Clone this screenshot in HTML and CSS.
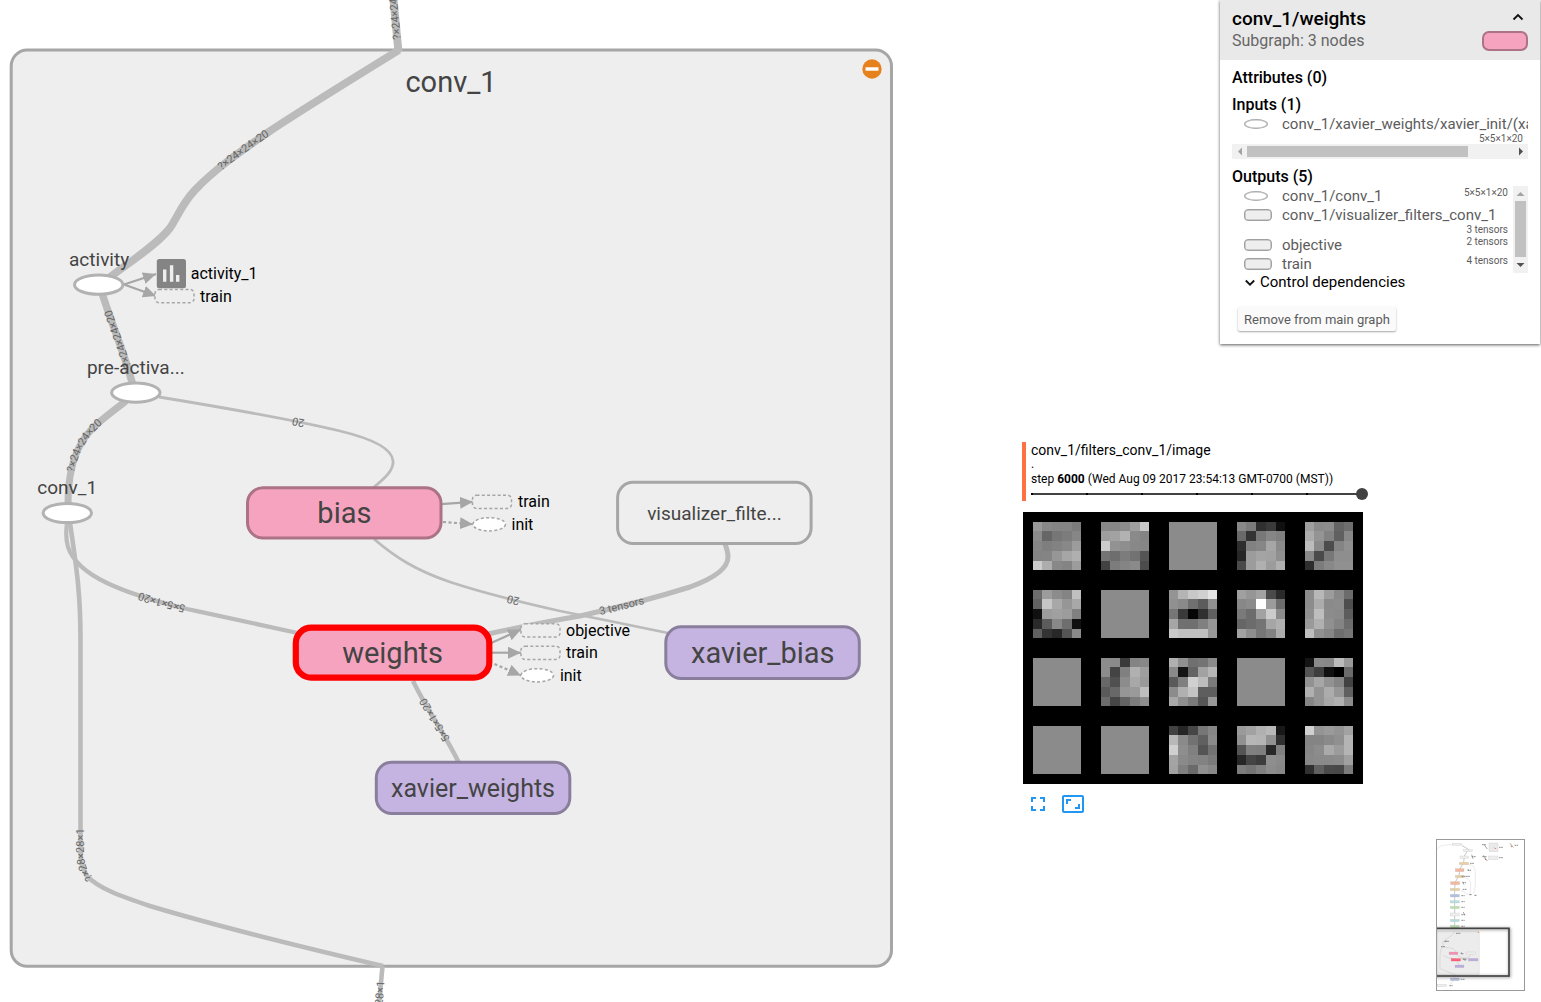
FILE: index.html
```html
<!DOCTYPE html>
<html lang="en">
<head>
<meta charset="utf-8">
<title>Graph explorer</title>
<link rel="stylesheet" href="styles.css">
</head>
<body>
<main class="app">
<svg class="graph" width="900" height="1002" viewBox="0 0 900 1002">
  <defs>
    <marker id="arrow" markerUnits="userSpaceOnUse" markerWidth="14" markerHeight="13" refX="13" refY="6" orient="auto">
      <path d="M0,0 L13,6 L0,12 Z" fill="#a6a6a6"/>
    </marker>
  </defs>
  <rect class="group" x="11.2" y="50" width="880.3" height="916.3" rx="16"/>
  <g class="edges">
    <path id="e-out" stroke-width="8" d="M398.500,52 L387.500,-62"/>
    <path id="e-act" stroke-width="7.800" d="M109,278 C125,265 156,246 170,228 C179,214 182,204 195,190 C214,170 238,153 270,131 C300,111 360,74 399,50"/>
    <path id="e-pre" stroke-width="7.500" d="M132.500,384 C124,352 112,325 102,293"/>
    <path id="e-conv" stroke-width="7" d="M68,504 C68,480 71,460 82,442 C90,428 105,417 126,401"/>
    <path id="e-bias" stroke-width="2.800" d="M373,488 C385,478 394,470 393,461 C392,446 365,437 340,431 C290,419 220,407 159,397"/>
    <path id="e-xbias" stroke-width="2.700" d="M668,633 C640,627 590,617 560,611 C520,602 480,592 450,582 C415,570 395,557 374,539"/>
    <path id="e-viz" stroke-width="5" d="M488,634 C520,627 550,621 580,616 C620,607 655,598 690,587 C712,579 728,569 728,557 C728,553 727,549 725,544"/>
    <path id="e-w" stroke-width="4.200" d="M300,633.500 C250,623 220,616 187,609 C150,600 128,593 107,583 C88,574 73,562 68,547 C66,540 66,530 67,523"/>
    <path id="e-xw" stroke-width="4.500" d="M458.500,762 C445,734 428,712 413,681"/>
    <path id="e-in" stroke-width="4.600" d="M383,966 C310,949 220,927 150,906 C120,896 98,888 87,876 C80.500,866 80.500,860 80.500,840 L80.500,640 C80.500,590 76,565 70,523"/>
    <path id="e-src" stroke-width="4.600" d="M374,1060 L382.500,966"/>
  </g>
  <g class="edge-labels">
    <text dy="3.500"><textPath href="#e-out" startOffset="12.500">?×24×24×20</textPath></text>
    <text dy="3.500" text-anchor="middle"><textPath href="#e-act" startOffset="50.400%">?×24×24×20</textPath></text>
    <text dy="3.500" text-anchor="middle"><textPath href="#e-pre" startOffset="49.500%">?×24×24×20</textPath></text>
    <text dy="3.500" text-anchor="middle"><textPath href="#e-conv" startOffset="50%">?×24×24×20</textPath></text>
    <text dy="3.500" text-anchor="middle"><textPath href="#e-bias" startOffset="50%">20</textPath></text>
    <text dy="3.500" text-anchor="middle"><textPath href="#e-xbias" startOffset="50.700%">20</textPath></text>
    <text dy="3.500" text-anchor="middle"><textPath href="#e-viz" startOffset="50.200%">3 tensors</textPath></text>
    <text dy="3.500" text-anchor="middle"><textPath href="#e-w" startOffset="50.900%">5×5×1×20</textPath></text>
    <text dy="3.500" text-anchor="middle"><textPath href="#e-xw" startOffset="52%">5×5×1×20</textPath></text>
    <text dy="3.500" text-anchor="middle"><textPath href="#e-in" startOffset="50%">?×28×28×1</textPath></text>
    <text dy="3.500" text-anchor="end"><textPath href="#e-src" startOffset="79.500">?×28×28×1</textPath></text>
  </g>
  <g class="links">
    <path d="M124,284.500 L156,274"/>
    <path d="M124,284.500 L156,296"/>
    <path d="M441,504.200 L473,501.800"/>
    <path class="dashed" d="M443,522 L473,524.200"/>
    <path d="M490,643.500 L521,629.500"/>
    <path d="M490,652.700 L521,652.700"/>
    <path class="dashed" d="M494.500,664 L521,675.500"/>
  </g>
  <g class="ops">
    <ellipse cx="98.700" cy="284.700" rx="24.200" ry="9.600"/>
    <ellipse cx="135.800" cy="392.600" rx="24.200" ry="9.600"/>
    <ellipse cx="67.300" cy="513" rx="24.200" ry="9.600"/>
  </g>
  <g class="stubs">
    <rect x="155" y="289.500" width="39" height="13.200" rx="4"/>
    <rect x="472.500" y="495.200" width="39" height="13.200" rx="4"/>
    <rect x="521" y="623.800" width="39" height="13.200" rx="4"/>
    <rect x="521" y="646.200" width="39" height="13.200" rx="4"/>
    <ellipse cx="489.200" cy="524.300" rx="16.300" ry="6.600"/>
    <ellipse cx="537.300" cy="675.300" rx="16.300" ry="6.600"/>
  </g>
  <g class="summary">
    <rect x="156.800" y="259" width="29.200" height="29.200" rx="2.500" fill="#848484"/>
    <path d="M163,269.500h3.400v12.200H163zM169.900,265.200h3.400v16.500h-3.400zM176,275h3.400v6.700H176z" fill="#eee"/>
  </g>
  <rect class="node pink" x="247.500" y="487.800" width="193.500" height="50.300" rx="15.500"/>
  <rect class="node plain" x="617.600" y="482.300" width="193.500" height="61.300" rx="15.500"/>
  <rect class="node pink selected" x="295.800" y="627.700" width="193.500" height="50" rx="15.500"/>
  <rect class="node violet" x="665.800" y="626.700" width="193.500" height="51.800" rx="15.500"/>
  <rect class="node violet" x="376.300" y="762.200" width="193.500" height="51.300" rx="15.500"/>
  <g class="labels" text-anchor="middle">
    <text class="large" x="451" y="91.500">conv_1</text>
    <text class="large" x="344.400" y="522.500">bias</text>
    <text class="large" x="392.600" y="662.500">weights</text>
    <text class="large" x="762.800" y="662.500">xavier_bias</text>
    <text class="medium" x="473" y="796.500">xavier_weights</text>
    <text x="714.400" y="519.700">visualizer_filte...</text>
    <text x="99.100" y="266">activity</text>
    <text x="135.800" y="374">pre-activa...</text>
    <text x="67.200" y="494">conv_1</text>
  </g>
  <g class="notes">
    <text x="190.700" y="279">activity_1</text>
    <text x="200" y="302">train</text>
    <text x="518" y="507">train</text>
    <text x="511.500" y="530">init</text>
    <text x="566" y="636">objective</text>
    <text x="566" y="658">train</text>
    <text x="559.900" y="681">init</text>
  </g>
  <circle cx="872" cy="69" r="9.700" fill="#e6821e"/>
  <rect x="865.500" y="67.300" width="13" height="3.400" fill="#fff"/>
</svg>

<div class="side">
  <section class="panel">
    <header class="panel-head">
      <div class="panel-names">
        <h1>conv_1/weights</h1>
        <p>Subgraph: 3 nodes</p>
      </div>
      <div class="panel-icons">
        <svg width="12" height="8" viewBox="0 0 12 8"><path d="M1.500,6.500 L6,2 L10.500,6.500" fill="none" stroke="#111" stroke-width="1.800"/></svg>
        <span class="swatch"></span>
      </div>
    </header>
    <div class="panel-body">
      <h2>Attributes (0)</h2>
      <h2>Inputs (1)</h2>
      <div class="inputs">
        <div class="row first"><i class="oval"></i><span>conv_1/xavier_weights/xavier_init/(xavier)</span></div>
        <div class="size-line">5×5×1×20</div>
        <div class="hbar">
          <svg width="15" height="15"><path d="M10,3.500 L6,7.500 L10,11.500Z" fill="#a3a3a3"/></svg>
          <span class="hthumb"></span>
          <svg class="end" width="15" height="15"><path d="M6,3.500 L10,7.500 L6,11.500Z" fill="#505050"/></svg>
        </div>
      </div>
      <h2>Outputs (5)</h2>
      <div class="outputs">
        <div class="list">
          <div class="row"><i class="oval"></i><span>conv_1/conv_1</span><small>5×5×1×20</small></div>
          <div class="row"><i class="pill"></i><span>conv_1/visualizer_filters_conv_1</span></div>
          <div class="size-line">3 tensors</div>
          <div class="row"><i class="pill"></i><span>objective</span><small>2 tensors</small></div>
          <div class="row"><i class="pill"></i><span>train</span><small>4 tensors</small></div>
        </div>
        <div class="vbar">
          <svg width="15" height="15"><path d="M3.500,10 L7.500,6 L11.500,10Z" fill="#a3a3a3"/></svg>
          <span class="vthumb"></span>
          <svg class="end" width="15" height="15"><path d="M3.500,5 L7.500,9 L11.500,5Z" fill="#505050"/></svg>
        </div>
      </div>
      <div class="control">
        <svg width="10" height="8" viewBox="0 0 10 8"><path d="M0.800,1.500 L5,5.700 L9.200,1.500" fill="none" stroke="#111" stroke-width="1.800"/></svg>
        <span>Control dependencies</span>
      </div>
      <button class="remove">Remove from main graph</button>
    </div>
  </section>

  <section class="card">
    <div class="card-head">
      <div class="card-title">conv_1/filters_conv_1/image</div>
      <div class="card-dot">.</div>
      <div class="card-step">step <b>6000</b> (Wed Aug 09 2017 23:54:13 GMT-0700 (MST))</div>
      <div class="slider"><i></i><i></i><i></i><i></i><i></i><i></i><span class="knob"></span></div>
    </div>
    <svg class="filters" id="filters" width="340" height="272" shape-rendering="crispEdges"></svg>
    <div class="actions">
      <svg width="24" height="24" viewBox="0 0 24 24"><path d="M7 14H5v5h5v-2H7v-3zm-2-4h2V7h3V5H5v5zm12 7h-3v2h5v-5h-2v3zM14 5v2h3v3h2V5h-5z"/></svg>
      <svg width="24" height="24" viewBox="0 0 24 24"><path d="M19 12h-2v3h-3v2h5v-5zM7 9h3V7H5v5h2V9zm14-6H3c-1.100 0-2 .9-2 2v14c0 1.100.9 2 2 2h18c1.100 0 2-.9 2-2V5c0-1.100-.9-2-2-2zm0 16.010H3V4.990h18v14.020z"/></svg>
    </div>
  </section>

  <div class="minimap">
    <svg width="87" height="150" viewBox="21 24 261 450">
      <g fill="none" stroke="#d4d4d4" stroke-width="1.500">
        <path d="M67,38 C40,38 25,42 20,52"/>
        <path d="M104,96 C130,98 136,100 136,130 C136,160 136,170 130,185 M92,135 C118,138 122,145 122,160 L120,185 M92,175 C105,180 110,188 125,188"/>
      </g>
      <path d="M95,40 L115,52 L103,72 L101,92 L90,110 L87,130 L76,150 L74,170 L74,290" fill="none" stroke="#aaa" stroke-width="2"/>
      <rect x="20" y="297" width="128" height="131" rx="3" fill="#ececec" stroke="#ccc"/>
      <path d="M75,298 C65,318 42,318 38,332 L40,345 C28,350 30,370 30,410 L75,428 L74,440 L60,458 M42,345 C60,348 78,348 76,360 M40,370 C60,382 55,376 80,382 L88,402 M80,368 C90,380 130,382 130,382 M90,381 C110,376 122,378 122,366" fill="none" stroke="#bdbdbd" stroke-width="1.200"/>
      <g stroke="#bbb" stroke-width=".8">
        <rect x="67" y="34" width="28" height="6" fill="#eee"/><rect x="101" y="53" width="26" height="6" fill="#eee"/>
        <rect x="90" y="72" width="26" height="7" fill="#eee"/><rect x="88" y="91" width="28" height="7" fill="#e9cf9e"/>
        <rect x="76" y="110" width="26" height="9" fill="#f3b7a0"/><rect x="76" y="130" width="26" height="7" fill="#e9cf9e"/>
        <rect x="62" y="149" width="27" height="9" fill="#f3b7a0"/><rect x="61" y="169" width="28" height="7" fill="#e9cf9e"/>
        <rect x="61" y="187" width="27" height="8" fill="#aebfe0"/><rect x="61" y="206" width="27" height="7" fill="#b4dfe1"/>
        <rect x="61" y="223" width="27" height="7" fill="#b8e2a8"/><rect x="61" y="243" width="27" height="9" fill="#eee"/>
        <rect x="61" y="262" width="27" height="7" fill="#b4dfe1"/><rect x="61" y="280" width="27" height="7" fill="#b8e2a8"/>
        <rect x="177" y="33" width="27" height="26" fill="#eaeaea"/><rect x="176" y="72" width="28" height="11" fill="#eee"/>
        <rect x="57" y="360" width="27" height="8" fill="#f48fb1"/><rect x="108" y="360" width="28" height="8" fill="#eee"/>
        <rect x="64" y="380" width="27" height="7" fill="#fb6584" stroke="#e34"/><rect x="115" y="379" width="29" height="8" fill="#bcabdd"/>
        <rect x="75" y="399" width="27" height="8" fill="#bcabdd"/><rect x="61" y="438" width="27" height="8" fill="#b7c2df"/>
        <rect x="22" y="457" width="28" height="7" fill="#eee"/>
      </g>
      <path d="M113,115h10M95,133h25M98,152h10M98,172h12M94,191h10M94,209h10M94,226h10M94,248h12M94,265h10M94,283h10M92,442h12M125,74h12M120,94h12M207,46h12M207,77h12M156,38h12M157,74h14M254,40h10M118,188h8M133,190h8M92,365h8M98,382h12M45,328h12M33,344h12M78,304h14M58,461h10" stroke="#555" stroke-width="2" stroke-dasharray="5 1.500" fill="none"/>
      <path d="M113,111l4,5M97,149l5,9M125,68l4,12M100,240l4,10M162,37l10,14M160,70l12,17M240,34l10,12M94,361l4,6M101,378l5,9M42,330l8,-4" stroke="#777" stroke-width="2" fill="none"/>
      <path d="M193,47l4,4M164,80l4,4M242,42l4,3" stroke="#e96e58" stroke-width="3"/>
      <circle cx="145" cy="301" r="2" fill="#f08a24"/>
      <rect class="viewport" x="12" y="289" width="225" height="143"/>
    </svg>
  </div>
</div>
</main>
<script src="filters.js"></script>
</body>
</html>
```
FILE: styles.css
```css
* { box-sizing: border-box; }
body { margin: 0; background: #fff; font-family: Roboto, "Liberation Sans", sans-serif; color: #000; overflow: hidden; }
.app { display: flex; width: 1541px; height: 1002px; }
.graph { display: block; flex: none; }

.group { fill: #eee; stroke: #a6a6a6; stroke-width: 3; }
.edges path { fill: none; stroke: #bbb; }
.edge-labels text { font-size: 11px; fill: #666; }
.links path { fill: none; stroke: #a6a6a6; stroke-width: 2.2; marker-end: url(#arrow); }
.links .dashed { stroke-dasharray: 3 2.5; }
.ops ellipse { fill: #fff; stroke: #b2b2b2; stroke-width: 3; }
.stubs rect, .stubs ellipse { fill: #eee; stroke: #a6a6a6; stroke-width: 1.5; stroke-dasharray: 3 2.3; }
.stubs ellipse { fill: #fff; }
.node { stroke-width: 3; }
.pink { fill: #f6a3bf; stroke: #ac7285; }
.plain { fill: #eee; stroke: #a6a6a6; }
.violet { fill: #c5b4e1; stroke: #8a7e9d; }
.selected { stroke: #f00; stroke-width: 6.2; }
.labels text { font-size: 19px; fill: #444; }
.labels .large { font-size: 29px; }
.labels .medium { font-size: 25px; }
.notes text { font-size: 16px; fill: #000; }

.side { flex: 1; display: flex; flex-direction: column; padding-left: 122px; }
.panel { align-self: flex-end; flex: none; width: 320px; height: 344px; margin-right: 1px; background: #fff; box-shadow: 0 1px 3px rgba(0,0,0,.65); }
.panel-head { display: flex; justify-content: space-between; height: 60px; padding: 8px 12px 0; background: #e9e9e9; }
h1 { margin: 0; font-size: 19px; line-height: 22px; font-weight: 500; }
.panel-head p { margin: 0; font-size: 16px; line-height: 22px; color: #666; }
.panel-icons { display: flex; flex-direction: column; align-items: flex-end; gap: 10px; padding-top: 5px; }
.panel-icons svg { margin-right: 4px; }
.swatch { width: 46px; height: 20px; border: 2px solid #ac7285; border-radius: 7px; background: #f6a3bf; }
.panel-body { padding: 8px 12px 0; }
h2 { margin: 0; font-size: 16px; line-height: 19px; font-weight: 500; }
h2 + h2 { margin-top: 8px; }
.inputs { height: 45px; margin-bottom: 8px; overflow: hidden; }
.row { display: grid; grid-template-columns: 38px 1fr auto; grid-template-rows: 19px; height: 19px; padding-left: 12px; font-size: 15px; color: #5c5c5c; align-items: center; white-space: nowrap; }
.row span { padding-top: 2px; line-height: 17px; }
.oval { width: 24px; height: 10px; border: 1px solid #acacac; box-shadow: inset 0 0 0 .5px #b8b8b8; border-radius: 50%; background: #fff; }
.pill { width: 28px; height: 12px; border: 1px solid #a0a0a0; box-shadow: inset 0 0 0 .5px #aaa; border-radius: 4px; background: #eee; }
.row small { align-self: start; padding-top: 1px; font-size: 10px; line-height: 12px; }
.size-line { height: 11px; line-height: 12px; font-size: 10px; color: #5c5c5c; text-align: right; }
.inputs .size-line { padding-right: 5px; }
.inputs .row { overflow: hidden; }
.hbar { display: flex; align-items: center; height: 15px; background: #f1f1f1; }
.hthumb { width: 221px; height: 11px; background: #c1c1c1; }
.end { margin-left: auto; }
.outputs { display: flex; height: 87px; }
.list { width: 276px; margin-right: 5px; }
.vbar { display: flex; flex-direction: column; align-items: center; width: 15px; background: #f1f1f1; }
.vthumb { width: 11px; height: 56px; background: #c1c1c1; }
.vbar .end { margin: auto 0 0; }
.control { display: flex; align-items: center; gap: 5px; height: 17px; padding-left: 13px; font-size: 15px; }
.control svg { margin-top: 3px; }
.remove { display: block; width: 158px; height: 24px; margin: 17px 0 0 6px; padding: 0; border: 0; border-radius: 2px; background: #fafafa; box-shadow: 0 1px 2px rgba(0,0,0,.35); font: 13px Roboto, sans-serif; color: #5c5c5c; white-space: nowrap; }

.card { flex: none; width: 346px; height: 373px; margin-top: 98px; }
.card-head { height: 59px; padding-left: 5px; border-left: 4px solid #ff7043; }
.card-title { height: 17px; line-height: 17px; font-size: 14px; }
.card-dot { height: 11px; line-height: 11px; font-size: 12px; }
.card-step { height: 18px; line-height: 18px; font-size: 12px; white-space: nowrap; }
.slider { display: flex; align-items: center; width: 337px; height: 12px; background: linear-gradient(#424242, #424242) 0 5px / 331px 2px no-repeat; }
.slider i { width: 2px; height: 2px; margin-right: 53px; background: #000; flex: none; }
.slider i:nth-child(6) { margin-right: 54px; }
.knob { width: 12px; height: 12px; margin-left: -6px; border-radius: 50%; background: #424242; flex: none; }
.filters { display: block; margin: 11px 0 0 1px; background: #000; }
.actions { display: flex; gap: 11px; margin: 8px 0 0 4px; fill: #2196f3; }

.minimap { align-self: flex-end; flex: none; width: 89px; height: 152px; margin: 24px 16px 0 0; border: 1px solid #999; overflow: hidden; }
.minimap svg { display: block; }
.viewport { fill: none; stroke: #444; stroke-width: 5; filter: drop-shadow(2px 2px 4px rgba(0,0,0,.5)); }
```
FILE: filters.js
```js
// 5x5 grey levels of each convolution filter; an empty string is a flat one.
const FILTERS = [
  "99 88 85 84 7c 8b 66 76 7c 86 86 7e 82 88 9c 83 84 96 a6 af cc ad 88 84 9c",
  "88 86 8c a0 c8 9e a2 b2 8a 84 cc 92 8e 88 86 74 6e 7c 72 55 42 7c 84 8a 4c",
  "",
  "88 7c 30 3a 10 6a 34 78 86 80 2e 82 86 a6 8a 26 9c a4 a2 90 4a 9c b0 9c b0",
  "9e 8a 8c 64 6e ac 94 82 60 88 bc 8a 4c 84 90 88 4a 78 8e 8e 2e 7c 88 90 90",
  "6c 9c 8c 84 c0 62 c6 a8 96 a8 10 9c a0 9c 80 2a 5c 88 6e 10 60 34 28 54 8a",
  "",
  "94 b4 c8 d0 e4 90 8a 70 5c 90 76 3a 06 30 60 a6 70 70 80 96 c8 c0 c0 c0 98",
  "a0 96 a2 4a 2a 88 8c ff 9c 6c 7a 6c a2 cc 8c 66 6c 74 a6 b0 a2 8e 76 82 ac",
  "8c b8 9c 88 6c 8c ac 8a 8c 4e 90 be 8c 8a 5c 9a b0 90 84 6c be 90 86 6e 76",
  "",
  "8c 8a 3a 84 88 8c 44 80 b0 9e 68 50 8c a8 9a 5a 68 96 9a be 6c 46 64 7c 8e",
  "b0 90 70 74 8a 8a 14 64 a2 b6 5a 80 d0 bc 7a 8c b0 c4 5e 5e a8 8e 7a 56 98",
  "",
  "14 8a 88 bc 9a 54 3e 10 00 6a 92 a6 92 84 42 b0 94 ac 96 60 86 94 a8 b0 8c",
  "",
  "",
  "42 26 46 76 86 b8 8a 72 60 8a d0 8e 80 54 72 a4 8a 84 82 7a a2 80 6a 90 88",
  "9a a2 b0 b8 18 90 b6 b4 92 30 54 80 7e 28 80 26 44 3c 8e 8a 7c 74 80 8c 88",
  "d0 94 9a 94 a2 84 84 8a 90 b4 86 8c aa 9c b4 88 8a 8a 8c a0 30 60 4a 48 7c"
];
const EDGES = [0, 9, 19, 29, 39, 48];
const svg = document.getElementById("filters");

function addRect(x, y, width, height, fill) {
  const rect = document.createElementNS("http://www.w3.org/2000/svg", "rect");
  for (const [name, value] of Object.entries({ x, y, width, height, fill })) {
    rect.setAttribute(name, value);
  }
  svg.appendChild(rect);
}

FILTERS.forEach((levels, index) => {
  const left = (index % 5) * 68 + 10;
  const top = Math.floor(index / 5) * 68 + 10;
  addRect(left, top, 48, 48, "#8b8b8b");
  if (!levels) return;
  levels.split(" ").forEach((level, i) => {
    const c = i % 5, r = Math.floor(i / 5);
    addRect(left + EDGES[c], top + EDGES[r], EDGES[c + 1] - EDGES[c], EDGES[r + 1] - EDGES[r], "#" + level + level + level);
  });
});
```
